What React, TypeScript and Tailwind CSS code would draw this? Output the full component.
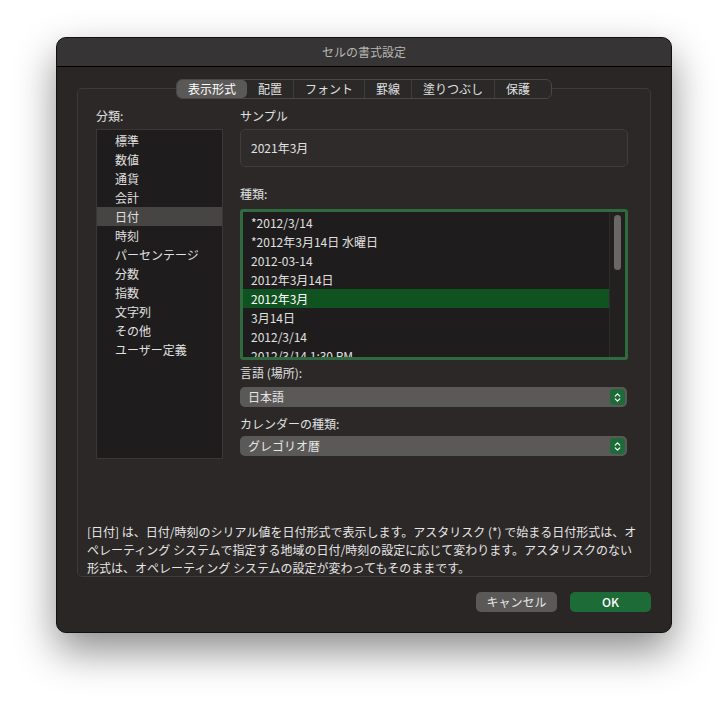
import { ChevronsUpDown } from 'lucide-react'

const categories = ['標準', '数値', '通貨', '会計', '日付', '時刻', 'パーセンテージ', '分数', '指数', '文字列', 'その他', 'ユーザー定義']
const types = ['*2012/3/14', '*2012年3月14日 水曜日', '2012-03-14', '2012年3月14日', '2012年3月', '3月14日', '2012/3/14', '2012/3/14 1:30 PM']
const tabs = ['表示形式', '配置', 'フォント', '罫線', '塗りつぶし', '保護']

function Select({ value }: { value: string }) {
  return (
    <div className="h-[20px] w-[387px] rounded-[5px] bg-[#5b5958] flex items-center justify-between pl-2 pr-[2px] text-[12px] text-[#e6e6e6]">
      <span>{value}</span>
      <span className="w-[15px] h-[16px] rounded-[4px] bg-[#1e6b3a] flex items-center justify-center">
        <ChevronsUpDown className="w-[11px] h-[11px] text-white" strokeWidth={2.5} />
      </span>
    </div>
  )
}

export default function App() {
  return (
    <div className="w-[728px] h-[707px] bg-white pt-[37px] pl-[56px]" style={{ fontFamily: '"Noto Sans CJK JP", "Noto Sans", sans-serif' }}>
      <div className="w-[616px] h-[596px] rounded-[10px] bg-[#292625] border border-[#111] shadow-[0_18px_40px_rgba(0,0,0,0.45)] overflow-hidden text-[#e0e0e0]">
        <div className="h-[29px] bg-[#363434] border-b border-black flex items-center justify-center text-[12px] text-[#b8b6b5]">
          セルの書式設定
        </div>
        <div className="relative mt-[21px] mx-[20px] h-[489px] rounded-[5px] border border-[#3d3a39] bg-[#2b2827]">
          <div className="absolute -top-[10px] left-0 right-0 flex justify-center">
            <div className="flex items-center h-[20px] rounded-[6px] border border-[#494645] bg-[#2b2828] text-[12px] pr-[10px]">
              {tabs.map((t, i) => (
                <span key={t} className={`h-[18px] flex items-center px-[11px] ${i === 0 ? 'bg-[#5b5958] rounded-[5px] text-white' : 'border-l border-[#3f3c3b] text-[#e0e0e0]'} ${i === 1 ? 'border-l-0' : ''}`}>{t}</span>
              ))}
            </div>
          </div>
          <div className="flex pt-[18px] pl-[18px]">
            <div className="w-[127px]">
              <div className="text-[12px] h-[20px]">分類:</div>
              <div className="mt-[2px] h-[330px] bg-[#1e1c1c] border border-[#3a3736] py-[1px]">
                {categories.map(c => (
                  <div key={c} className={`h-[19px] leading-[19px] pl-[18px] text-[12px] ${c === '日付' ? 'bg-[#474544]' : ''}`}>{c}</div>
                ))}
              </div>
            </div>
            <div className="ml-[17px] w-[388px]">
              <div className="text-[12px] h-[20px]">サンプル</div>
              <div className="mt-[2px] h-[38px] rounded-[5px] border border-[#3f3c3b] bg-[#2e2b2a] flex items-center pl-[10px] text-[12px]">2021年3月</div>
              <div className="mt-[18px] text-[12px] h-[20px]">種類:</div>
              <div className="mt-[4px] h-[151px] border-[3px] border-[#2f6b3f] rounded-[3px] bg-[#1e1c1c] flex overflow-hidden">
                <div className="flex-1 overflow-hidden pt-[1px]">
                  {types.map(t => (
                    <div key={t} className={`h-[19px] leading-[19px] pl-[8px] text-[12px] ${t === '2012年3月' ? 'bg-[#0f5320] text-white' : ''}`}>{t}</div>
                  ))}
                </div>
                <div className="w-[16px] border-l border-[#2e2b2a] bg-[#232120] pt-[3px] flex justify-center">
                  <div className="w-[7px] h-[55px] rounded-full bg-[#6a6766]" />
                </div>
              </div>
              <div className="mt-[4px] text-[12px] h-[20px]">言語 (場所):</div>
              <div className="mt-[3px]"><Select value="日本語" /></div>
              <div className="mt-[8px] text-[12px] h-[20px]">カレンダーの種類:</div>
              <div className="mt-[1px]"><Select value="グレゴリオ暦" /></div>
            </div>
          </div>
          <p className="mt-[64px] px-[9px] text-[12px] leading-[18px] text-[#e6e6e6]">
            [日付] は、日付/時刻のシリアル値を日付形式で表示します。アスタリスク (*) で始まる日付形式は、オペレーティング システムで指定する地域の日付/時刻の設定に応じて変わります。アスタリスクのない形式は、オペレーティング システムの設定が変わってもそのままです。
          </p>
        </div>
        <div className="flex justify-end gap-[13px] mt-[15px] mr-[20px]">
          <button className="w-[81px] h-[20px] rounded-[5px] bg-[#5b5958] text-[12px] text-[#e6e6e6]">キャンセル</button>
          <button className="w-[81px] h-[20px] rounded-[5px] bg-[#1d6b37] text-[12px] text-white font-medium">OK</button>
        </div>
      </div>
    </div>
  )
}
